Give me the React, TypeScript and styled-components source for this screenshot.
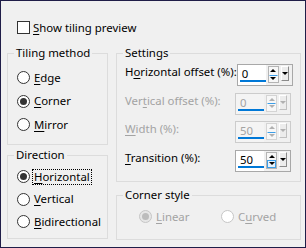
import styled, { createGlobalStyle } from "styled-components";

const GlobalStyle = createGlobalStyle`
  html, body {
    margin: 0;
    padding: 0;
    background: #f0f0f0;
  }
  body {
    font-family: "Noto Sans", "Open Sans", sans-serif;
    font-size: 11.4px;
    color: #000;
  }
`;

const Dialog = styled.div`
  width: 306px;
  height: 248px;
  box-sizing: border-box;
  border: 1px solid #1f1d48;
  background: #f0f0f0;
  padding: 20px 0 0 6px;
  white-space: nowrap;
`;

const CheckRow = styled.label`
  display: flex;
  align-items: center;
  gap: 3px;
  margin-left: 10px;
  height: 13px;
  line-height: 14px;
`;

const CheckBox = styled.span`
  width: 13px;
  height: 13px;
  box-sizing: border-box;
  border: 1px solid #333;
  background: #fff;
`;

const Columns = styled.div`
  display: flex;
  gap: 8px;
  margin-top: 12px;
`;

const Column = styled.div<{ $width: number; $gap: number }>`
  display: flex;
  flex-direction: column;
  width: ${(p) => p.$width}px;
  gap: ${(p) => p.$gap}px;
`;

const Group = styled.fieldset<{ $height: number }>`
  margin: 0;
  min-width: 0;
  height: ${(p) => p.$height}px;
  box-sizing: border-box;
  border: 1px solid #dcdcdc;
  padding: 0;
`;

const Legend = styled.legend`
  margin-left: 6px;
  padding: 0 2px;
  line-height: 14px;
  color: #000;
`;

const GroupBody = styled.div<{ $pad: string }>`
  padding: ${(p) => p.$pad};
`;

const RadioList = styled.div<{ $gap: number; $row?: boolean }>`
  display: flex;
  flex-direction: ${(p) => (p.$row ? "row" : "column")};
  gap: ${(p) => p.$gap}px;
`;

const RadioItem = styled.label<{ $disabled?: boolean; $width?: number }>`
  display: flex;
  align-items: center;
  gap: 4px;
  height: 13px;
  line-height: 14px;
  color: ${(p) => (p.$disabled ? "#a3a3a3" : "#000")};
  width: ${(p) => (p.$width ? `${p.$width}px` : "auto")};
`;

const Circle = styled.span<{ $checked?: boolean; $disabled?: boolean; $fill?: string }>`
  width: 13px;
  height: 13px;
  flex: none;
  box-sizing: border-box;
  border-radius: 50%;
  border: 1px solid ${(p) => (p.$disabled ? "#c6c6c6" : "#333")};
  background: ${(p) => p.$fill ?? "#fff"};
  display: flex;
  align-items: center;
  justify-content: center;
  &::after {
    content: "";
    display: ${(p) => (p.$checked ? "block" : "none")};
    width: 7px;
    height: 7px;
    border-radius: 50%;
    background: ${(p) => (p.$disabled ? "#bcbcbc" : "#333")};
  }
`;

const FocusText = styled.span`
  outline: 1px dotted #000;
  outline-offset: 0;
  padding: 0 1px;
  margin-left: -1px;
`;

const SettingRows = styled.div`
  display: flex;
  flex-direction: column;
  gap: 6.5px;
`;

const SettingRow = styled.div<{ $disabled?: boolean }>`
  display: flex;
  align-items: flex-start;
  justify-content: space-between;
  height: 22px;
  color: ${(p) => (p.$disabled ? "#a3a3a3" : "#000")};
`;

const SettingLabel = styled.span`
  line-height: 16px;
`;

const Spin = styled.div<{ $disabled?: boolean }>`
  width: 56px;
  height: 22px;
  flex: none;
  box-sizing: border-box;
  border: 1px solid ${(p) => (p.$disabled ? "#cccccc" : "#a8a8a8")};
  display: flex;
  background: #f0f0f0;
`;

const SpinInput = styled.div<{ $disabled?: boolean }>`
  position: relative;
  width: 28px;
  background: ${(p) => (p.$disabled ? "#f4f4f4" : "#fff")};
  color: ${(p) => (p.$disabled ? "#a3a3a3" : "#000")};
  line-height: 18px;
  padding-left: 4px;
  box-sizing: border-box;
  &::after {
    content: "";
    position: absolute;
    left: 2px;
    right: 0;
    bottom: 3px;
    height: 2px;
    background: #0078d7;
  }
`;

const SpinButtons = styled.div`
  display: flex;
  gap: 2px;
  padding: 1px 0 0 2px;
`;

const UpDown = styled.div<{ $disabled?: boolean }>`
  width: 11px;
  height: 17px;
  box-sizing: border-box;
  border: 1px solid ${(p) => (p.$disabled ? "#d4d4d4" : "#b4b4b4")};
  background: #f7f7f7;
  display: flex;
  flex-direction: column;
`;

const Half = styled.div<{ $hover?: boolean }>`
  flex: 1;
  display: flex;
  align-items: center;
  justify-content: center;
  box-sizing: border-box;
  border: 1px solid ${(p) => (p.$hover ? "#3c9ee8" : "transparent")};
  background: ${(p) => (p.$hover ? "#e5f1fb" : "transparent")};
  & + & {
    border-top: 1px solid ${(p) => (p.$hover ? "#3c9ee8" : "#c8c8c8")};
  }
`;

const Arrow = styled.span<{ $up?: boolean; $disabled?: boolean }>`
  width: 0;
  height: 0;
  border-left: 3px solid transparent;
  border-right: 3px solid transparent;
  ${(p) => (p.$up ? "border-bottom" : "border-top")}: 3px solid
    ${(p) => (p.$disabled ? "#b0b0b0" : "#000")};
`;

const Drop = styled.div<{ $disabled?: boolean }>`
  width: 8px;
  height: 15px;
  box-sizing: border-box;
  border: 1px solid;
  border-color: #fff ${(p) => (p.$disabled ? "#c0c0c0" : "#8a8a8a")}
    ${(p) => (p.$disabled ? "#c0c0c0" : "#8a8a8a")} #fff;
  background: #ececec;
  display: flex;
  align-items: center;
  justify-content: center;
`;

const U = styled.u`
  text-decoration-thickness: 1px;
  text-underline-offset: 2px;
`;

type SpinProps = { value: string; disabled?: boolean; hover?: boolean };

const SpinBox = ({ value, disabled, hover }: SpinProps) => (
  <Spin $disabled={disabled}>
    <SpinInput $disabled={disabled}>{value}</SpinInput>
    <SpinButtons>
      <UpDown $disabled={disabled}>
        <Half>
          <Arrow $up $disabled={disabled} />
        </Half>
        <Half $hover={hover}>
          <Arrow $disabled={disabled} />
        </Half>
      </UpDown>
      <Drop $disabled={disabled}>
        <Arrow $disabled={disabled} />
      </Drop>
    </SpinButtons>
  </Spin>
);

const App = () => {
  return (
    <>
      <GlobalStyle />
      <Dialog>
        <CheckRow>
          <CheckBox />
          <span>
            <U>S</U>how tiling preview
          </span>
        </CheckRow>

        <Columns>
          <Column $width={101} $gap={3}>
            <Group $height={99}>
              <Legend>Tiling method</Legend>
              <GroupBody $pad="11px 0 0 9px">
                <RadioList $gap={10.5}>
                  <RadioItem>
                    <Circle />
                    <span>
                      <U>E</U>dge
                    </span>
                  </RadioItem>
                  <RadioItem>
                    <Circle $checked />
                    <span>
                      <U>C</U>orner
                    </span>
                  </RadioItem>
                  <RadioItem>
                    <Circle />
                    <span>
                      <U>M</U>irror
                    </span>
                  </RadioItem>
                </RadioList>
              </GroupBody>
            </Group>
            <Group $height={91}>
              <Legend>Direction</Legend>
              <GroupBody $pad="8px 0 0 9px">
                <RadioList $gap={9.5}>
                  <RadioItem>
                    <Circle $checked />
                    <FocusText>
                      <U>H</U>orizontal
                    </FocusText>
                  </RadioItem>
                  <RadioItem>
                    <Circle />
                    <span>
                      <U>V</U>ertical
                    </span>
                  </RadioItem>
                  <RadioItem>
                    <Circle />
                    <span>
                      <U>B</U>idirectional
                    </span>
                  </RadioItem>
                </RadioList>
              </GroupBody>
            </Group>
          </Column>

          <Column $width={185} $gap={6}>
            <Group $height={136}>
              <Legend>Settings</Legend>
              <GroupBody $pad="4px 9px 0 8px">
                <SettingRows>
                  <SettingRow>
                    <SettingLabel>
                      H<U>o</U>rizontal offset (%):
                    </SettingLabel>
                    <SpinBox value="0" />
                  </SettingRow>
                  <SettingRow $disabled>
                    <SettingLabel>
                      Ver<U>t</U>ical offset (%):
                    </SettingLabel>
                    <SpinBox value="0" disabled />
                  </SettingRow>
                  <SettingRow $disabled>
                    <SettingLabel>
                      <U>W</U>idth (%):
                    </SettingLabel>
                    <SpinBox value="50" disabled />
                  </SettingRow>
                  <SettingRow>
                    <SettingLabel>
                      <U>T</U>ransition (%):
                    </SettingLabel>
                    <SpinBox value="50" hover />
                  </SettingRow>
                </SettingRows>
              </GroupBody>
            </Group>
            <Group $height={52}>
              <Legend>Corner style</Legend>
              <GroupBody $pad="8px 0 0 22px">
                <RadioList $gap={0} $row>
                  <RadioItem $disabled $width={82}>
                    <Circle $checked $disabled $fill="#e6e6e6" />
                    <span>
                      <U>L</U>inear
                    </span>
                  </RadioItem>
                  <RadioItem $disabled>
                    <Circle $disabled />
                    <span>
                      C<U>u</U>rved
                    </span>
                  </RadioItem>
                </RadioList>
              </GroupBody>
            </Group>
          </Column>
        </Columns>
      </Dialog>
    </>
  );
};

export default App;
